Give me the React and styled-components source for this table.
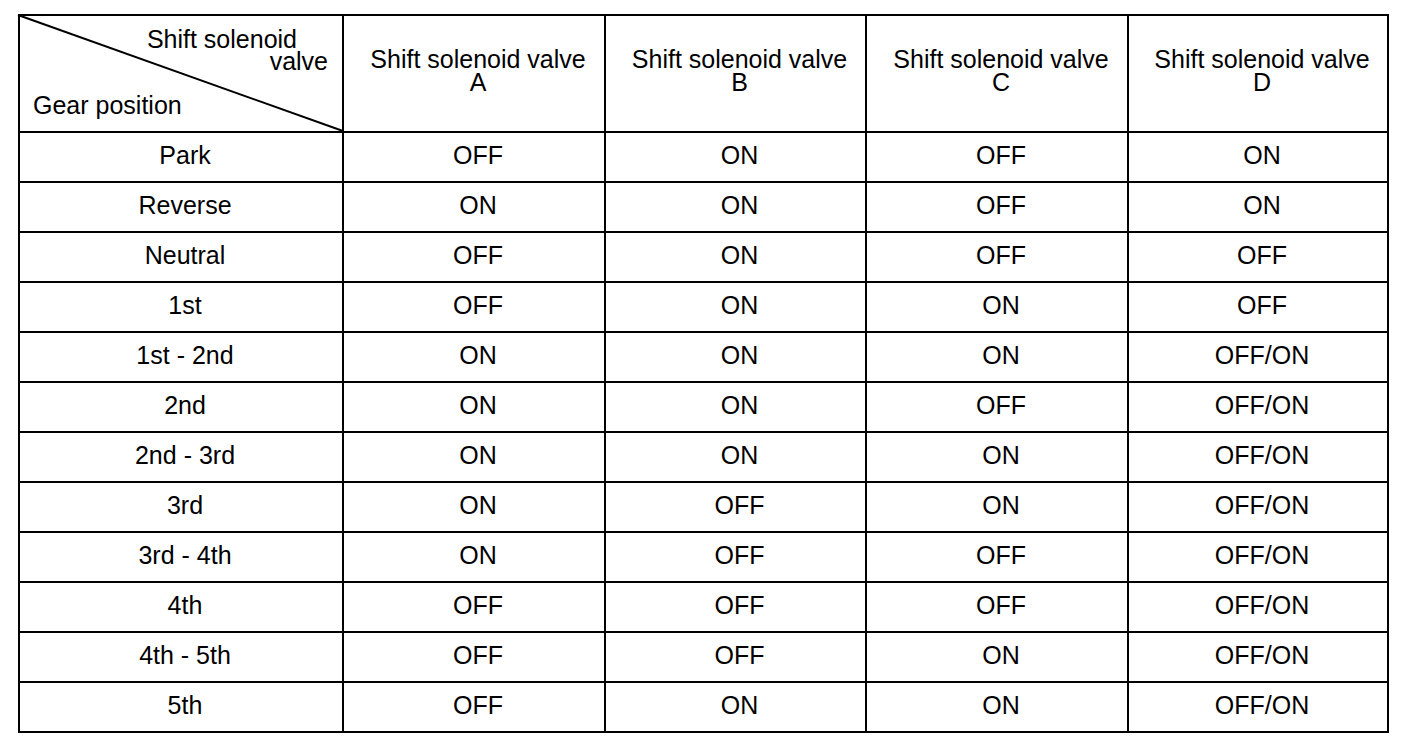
import React from "react";
import styled, { createGlobalStyle } from "styled-components";

const GlobalStyle = createGlobalStyle`
  html, body {
    margin: 0;
    padding: 0;
    background: #fff;
  }
  body {
    font-family: "Liberation Sans", Arial, sans-serif;
    color: #000;
  }
`;

const Page = styled.div`
  padding: 14px 0 0 18px;
`;

const Grid = styled.div`
  display: grid;
  grid-template-columns: 322px 260px 259px 260px 258px;
  grid-template-rows: 115px repeat(12, 48px);
  gap: 2px;
  padding: 2px;
  background: #000;
  width: fit-content;
`;

const Corner = styled.div`
  position: relative;
  background: #fff;
  display: flex;
  flex-direction: column;
  padding-top: 12px;
  font-size: 25px;
  line-height: 22px;
`;

const CornerLine = styled.div`
  text-align: ${(p) => p.align || "left"};
  padding-right: ${(p) => p.right || 0}px;
  padding-left: ${(p) => p.left || 0}px;
  margin-top: ${(p) => p.top || 0}px;
`;

const Diagonal = styled.svg`
  position: absolute;
  top: -1px;
  left: -2px;
  width: calc(100% + 3px);
  height: calc(100% + 1px);
  overflow: visible;
  pointer-events: none;
`;

const HeadCell = styled.div`
  background: #fff;
  display: flex;
  flex-direction: column;
  align-items: center;
  justify-content: center;
  padding: 0 0 5px 8px;
  font-size: 25px;
  line-height: 23px;
  text-align: center;
`;

const Cell = styled.div`
  background: #fff;
  display: flex;
  align-items: center;
  justify-content: center;
  padding: 0 0 4px 8px;
  font-size: 25px;
  line-height: 1;
`;

const valves = ["A", "B", "C", "D"];

const rows = [
  ["Park", "OFF", "ON", "OFF", "ON"],
  ["Reverse", "ON", "ON", "OFF", "ON"],
  ["Neutral", "OFF", "ON", "OFF", "OFF"],
  ["1st", "OFF", "ON", "ON", "OFF"],
  ["1st - 2nd", "ON", "ON", "ON", "OFF/ON"],
  ["2nd", "ON", "ON", "OFF", "OFF/ON"],
  ["2nd - 3rd", "ON", "ON", "ON", "OFF/ON"],
  ["3rd", "ON", "OFF", "ON", "OFF/ON"],
  ["3rd - 4th", "ON", "OFF", "OFF", "OFF/ON"],
  ["4th", "OFF", "OFF", "OFF", "OFF/ON"],
  ["4th - 5th", "OFF", "OFF", "ON", "OFF/ON"],
  ["5th", "OFF", "ON", "ON", "OFF/ON"],
];

const App = () => {
  return (
    <Page>
      <GlobalStyle />
      <Grid>
        <Corner>
          <Diagonal>
            <line x1="0" y1="0" x2="100%" y2="100%" stroke="#000" strokeWidth="2" />
          </Diagonal>
          <CornerLine align="right" right={45}>Shift solenoid</CornerLine>
          <CornerLine align="right" right={14}>valve</CornerLine>
          <CornerLine left={13} top={22}>Gear position</CornerLine>
        </Corner>
        {valves.map((v) => (
          <HeadCell key={v}>
            <span>Shift solenoid valve</span>
            <span>{v}</span>
          </HeadCell>
        ))}
        {rows.map((row) =>
          row.map((val, i) => <Cell key={row[0] + i}>{val}</Cell>)
        )}
      </Grid>
    </Page>
  );
};

export default App;
